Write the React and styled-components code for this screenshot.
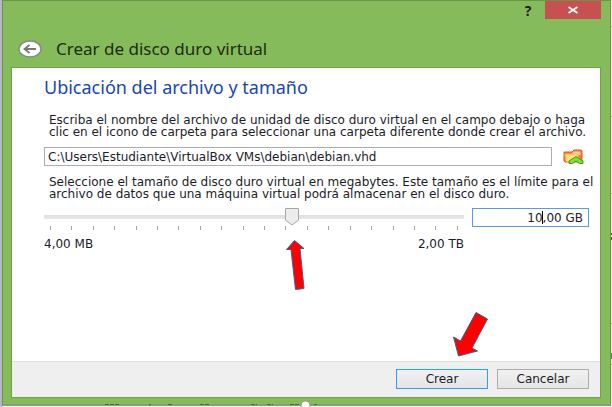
import React, { useState } from "react";
import styled, { createGlobalStyle } from "styled-components";

const GlobalStyle = createGlobalStyle`
  *, *::before, *::after { box-sizing: border-box; }
  html, body { margin: 0; background: #f4f4f6; }
  body { font-family: "DejaVu Sans", Verdana, sans-serif; font-size: 12px; line-height: 12px; color: #1c1c28; overflow: hidden; }
  button, input { font: inherit; color: inherit; margin: 0; }
`;

const Desktop = styled.div`
  position: relative;
  display: flex;
  flex-direction: column;
  min-height: 100vh;
  padding: 0 1px 1px 2px;
  background: linear-gradient(90deg, #b7b7bf 2px, #f4f4f6 2px);
`;

const Window = styled.main`
  flex: 1;
  display: flex;
  flex-direction: column;
  padding: 0 9px 6px 8px;
  background: #86bb5b;
  border: 1px solid #6b9448;
  border-bottom: 2px solid #8c9c80;
`;

const TitleBar = styled.div`
  display: flex;
  justify-content: flex-end;
  height: 18px;
`;

const CaptionButton = styled.button`
  display: grid;
  place-items: center;
  width: ${(p) => (p.$danger ? 56 : 34)}px;
  padding: 0;
  border: 0;
  background: ${(p) => (p.$danger ? "#c75050" : "transparent")};
  font: bold 14px "Open Sans", sans-serif;
  color: #20201f;
`;

const Header = styled.header`
  display: flex;
  align-items: center;
  gap: 14px;
  height: 48px;
  padding: 12px 0 0 7px;
`;

const BackButton = styled.button`
  display: flex;
  padding: 0;
  border: 0;
  background: none;
`;

const Title = styled.h1`
  margin: 0;
  font: 17px/20px "Noto Sans", sans-serif;
  color: #1b2c10;
`;

const Page = styled.section`
  flex: 1;
  display: flex;
  flex-direction: column;
  background: #fff;
  border: 1px solid #70a346;
`;

const Content = styled.div`
  flex: 1;
  padding: 8px 11px 0 32px;
`;

const Heading = styled.h2`
  margin: 0 0 16px;
  font: 18px/22px "Noto Sans", sans-serif;
  color: #1747ae;
`;

const Text = styled.p`
  margin: 0;
  padding-left: 5px;
  white-space: nowrap;
`;

const PathRow = styled.div`
  display: flex;
  align-items: center;
  gap: 11px;
  margin: 9px 0 10px;
  padding-right: 5px;
`;

const TextField = styled.input`
  flex: ${(p) => (p.$value ? "0 0 117px" : "1")};
  min-width: 0;
  height: 19px;
  padding: 0 ${(p) => (p.$value ? 5 : 3)}px;
  border: 1px solid ${(p) => (p.$value ? "#569de5" : "#abadb3")};
  border-radius: 0;
  background: #fff;
  text-align: ${(p) => (p.$value ? "right" : "left")};
  outline: none;
`;

const IconButton = styled.button`
  display: flex;
  padding: 0;
  border: 0;
  background: none;
`;

const SizeRow = styled.div`
  display: flex;
  align-items: flex-start;
  gap: 8px;
  margin-top: 8px;
`;

const ValueBox = styled.div`
  position: relative;
  display: flex;
`;

const Caret = styled.span`
  position: absolute;
  right: 46px;
  top: 3px;
  width: 1px;
  height: 13px;
  background: #000;
`;

const SliderColumn = styled.div`
  flex: 1;
`;

const Slider = styled.div`
  position: relative;
  height: 18px;
  background: linear-gradient(#dfe0e1, #e5e9e7) 0 7px / 100% 4px no-repeat;
`;

const Range = styled.input`
  display: block;
  width: 100%;
  height: 18px;
  opacity: 0;
`;

const Thumb = styled.svg`
  position: absolute;
  top: 0;
  transform: translateX(-50%);
  pointer-events: none;
`;

const Ticks = styled.div`
  display: flex;
  justify-content: space-between;
  padding: 0 6px;
`;

const Tick = styled.span`
  width: 1px;
  height: 4px;
  background: #a5a596;
`;

const Limits = styled.div`
  display: flex;
  justify-content: space-between;
  margin-top: 8px;
`;

const Footer = styled.footer`
  display: flex;
  justify-content: flex-end;
  gap: 9px;
  padding: 7px 11px 8px;
  background: #efefef;
  border-top: 1px solid #dfdfdf;
`;

const DialogButton = styled.button`
  width: 92px;
  height: 20px;
  padding: 0;
  background: linear-gradient(#f1f1f1, #e5e5e5);
  border: 1px solid ${(p) => (p.$primary ? "#3399ff" : "#acacac")};
`;

const Annotations = styled.svg`
  position: absolute;
  left: 0;
  top: 0;
  pointer-events: none;
`;

const TICKS = Array.from({ length: 20 }, (_, i) => i);

export default function App() {
  const [path, setPath] = useState("C:\\Users\\Estudiante\\VirtualBox VMs\\debian\\debian.vhd");
  const [size, setSize] = useState("10,00 GB");
  const [position, setPosition] = useState(59);

  return (
    <Desktop>
      <GlobalStyle />
      <Window>
        <TitleBar>
          <CaptionButton aria-label="Ayuda">?</CaptionButton>
          <CaptionButton $danger aria-label="Cerrar">
            <svg width="12" height="8" viewBox="0 0 12 8">
              <path d="M1.500 1 10.500 7M10.500 1 1.500 7" stroke="#fff" strokeWidth="1.6" />
            </svg>
          </CaptionButton>
        </TitleBar>
        <Header>
          <BackButton aria-label="Atrás">
            <svg width="24" height="18" viewBox="0 0 24 18">
              <ellipse cx="12" cy="9" rx="11" ry="8" fill="#fff" stroke="#858b82" strokeWidth="1.4" />
              <path d="M18 9H7M11.5 5 6.5 9l5 4" fill="none" stroke="#777" strokeWidth="1.8" />
            </svg>
          </BackButton>
          <Title>Crear de disco duro virtual</Title>
        </Header>
        <Page>
          <Content>
            <Heading>Ubicación del archivo y tamaño</Heading>
            <Text>
              Escriba el nombre del archivo de unidad de disco duro virtual en el campo debajo o haga
              <br />
              clic en el icono de carpeta para seleccionar una carpeta diferente donde crear el archivo.
            </Text>
            <PathRow>
              <TextField aria-label="Ubicación del archivo" value={path} onChange={(e) => setPath(e.target.value)} />
              <IconButton aria-label="Elegir carpeta">
                <svg width="21" height="16" viewBox="0 0 21 16">
                  <path d="M1 3h8l2-2h7l1 1v11H2L1 12z" fill="#f47a3c" stroke="#e2581f" />
                  <path d="M10 2.500h7.500V6H9z" fill="#fbd0a8" />
                  <path d="M2 5h12.500l2 7.500H3z" fill="#ffe07a" stroke="#f9b347" />
                  <path d="M13 7.500 20 12v2.500h-3.500L13 12l-3.500 2.500H6V12z" fill="#7ce03c" stroke="#3f9b1d" strokeLinejoin="round" />
                </svg>
              </IconButton>
            </PathRow>
            <Text>
              Seleccione el tamaño de disco duro virtual en megabytes. Este tamaño es el límite para el
              <br />
              archivo de datos que una máquina virtual podrá almacenar en el disco duro.
            </Text>
            <SizeRow>
              <SliderColumn>
                <Slider>
                  <Range
                    type="range"
                    aria-label="Tamaño del disco"
                    value={position}
                    onChange={(e) => setPosition(Number(e.target.value))}
                  />
                  <Thumb width="14" height="18" viewBox="0 0 14 18" style={{ left: `${position}%` }}>
                    <path d="M.5.5h13v11.5L7 17 .5 12z" fill="#ececec" stroke="#a6a6a6" />
                  </Thumb>
                </Slider>
                <Ticks>
                  {TICKS.map((i) => (
                    <Tick key={i} />
                  ))}
                </Ticks>
                <Limits>
                  <span>4,00 MB</span>
                  <span>2,00 TB</span>
                </Limits>
              </SliderColumn>
              <ValueBox>
                <TextField $value size={10} aria-label="Tamaño" value={size} onChange={(e) => setSize(e.target.value)} />
                <Caret />
              </ValueBox>
            </SizeRow>
          </Content>
          <Footer>
            <DialogButton $primary>Crear</DialogButton>
            <DialogButton>Cancelar</DialogButton>
          </Footer>
        </Page>
      </Window>
      <Annotations width="612" height="407" viewBox="0 0 612 407" aria-hidden="true">
        <g fill="#fe0000" stroke="#3d5f8c" strokeWidth="1">
          <path d="M294.5 240.500 304 248.500H300L304 288.500 295.500 289.500 291 249.500H286.500z" />
          <path d="M458.500 356 453.500 337 460.500 341 476 312.500 487.500 319 472 348 477.500 351z" />
        </g>
        <path d="M105 404.500h15M149 404.500h2M168 404.500h5M200 404.500h10M251 404.500h6M267 404.500h6M290 404.500h9M314 404.500h3" stroke="#4c6b36" strokeDasharray="4 1" />
        <circle cx="305.500" cy="405.500" r="4.500" fill="#fff" stroke="#8f9293" />
        <path d="M611 26.500h1M611 116.500h1M611 193.500h1M611 323.500h1M611 364.500h1" stroke="#bbb" />
        <path d="M611.500 233v2M611.500 237v3" stroke="#555" />
        <path d="M611.500 353v6" stroke="#637d9c" />
      </Annotations>
    </Desktop>
  );
}
